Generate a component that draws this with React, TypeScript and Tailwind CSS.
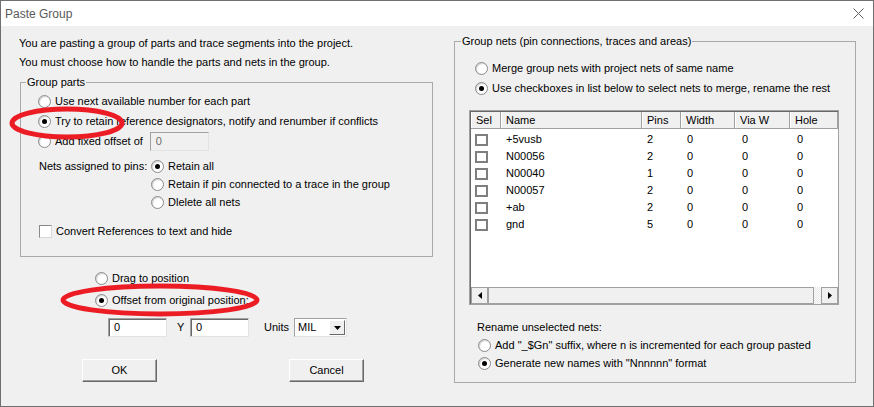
import React from 'react'

const nets = [
  { name: '+5vusb', pins: 2 },
  { name: 'N00056', pins: 2 },
  { name: 'N00040', pins: 1 },
  { name: 'N00057', pins: 2 },
  { name: '+ab', pins: 2 },
  { name: 'gnd', pins: 5 },
]

function Radio({ checked, label, className }: { checked?: boolean; label: React.ReactNode; className?: string }) {
  return (
    <div className={'flex items-center gap-[4px] ' + (className ?? 'h-[20px]')}>
      <span className="w-[13px] h-[13px] shrink-0 rounded-full border border-[#8a8a8a] bg-white flex items-center justify-center shadow-[inset_1px_1px_1px_#d0d0d0]">
        {checked && <span className="w-[5px] h-[5px] rounded-full bg-black" />}
      </span>
      <span>{label}</span>
    </div>
  )
}

function TextBox({ value, disabled, className }: { value: string; disabled?: boolean; className?: string }) {
  return (
    <div
      className={
        'h-[19px] border border-t-[#a0a0a0] border-l-[#a0a0a0] border-b-[#e3e3e3] border-r-[#e3e3e3] pl-[5px] leading-[17px] ' +
        (disabled ? 'bg-[#f0f0f0] text-[#6d6d6d] ' : 'bg-white shadow-[inset_1px_1px_0_#696969] ') +
        (className ?? '')
      }
    >
      {value}
    </div>
  )
}

function Button({ children }: { children: React.ReactNode }) {
  return (
    <button className="w-[75px] h-[23px] bg-[#f0f0f0] border border-t-white border-l-white border-b-[#696969] border-r-[#696969] shadow-[inset_-1px_-1px_0_#a0a0a0]">
      {children}
    </button>
  )
}

function ListCheck() {
  return <span className="block w-[13px] h-[12px] border-2 border-[#7f7f7f] bg-white" />
}

function ArrowBtn({ dir }: { dir: 'left' | 'right' }) {
  return (
    <div className="w-[17px] h-full bg-[#f0f0f0] border border-[#a0a0a0] flex items-center justify-center">
      <svg width="4" height="7" viewBox="0 0 4 7">
        {dir === 'left' ? <path d="M4 0 L0 3.5 L4 7 Z" fill="#000" /> : <path d="M0 0 L4 3.5 L0 7 Z" fill="#000" />}
      </svg>
    </div>
  )
}

const cols = ['w-[30px]', 'w-[141px]', 'w-[39px]', 'w-[54px]', 'w-[55px]', 'w-[48px]']

export default function App() {
  return (
    <div className="relative w-[874px] h-[407px] border border-[#6f6f6f] bg-[#f0f0f0] text-[11px] text-black font-['Liberation_Sans',Arial,sans-serif] overflow-hidden">
      {/* title bar */}
      <div className="h-[25px] bg-white flex items-center justify-between pl-[4px] pr-[9px]">
        <span className="text-[12px] text-[#5a5a5a]">Paste Group</span>
        <svg width="11" height="11" viewBox="0 0 11 11">
          <path d="M0.5 0.5 L10.5 10.5 M10.5 0.5 L0.5 10.5" stroke="#606060" strokeWidth="1" />
        </svg>
      </div>

      <div className="flex pl-[18px]">
        {/* left column */}
        <div className="w-[414px] pt-[8px]">
          <div className="h-[19px] leading-[19px]">You are pasting a group of parts and trace segments into the project.</div>
          <div className="h-[19px] leading-[19px]">You must choose how to handle the parts and nets in the group.</div>

          <fieldset className="mt-[3px] ml-[1px] w-[413px] border border-[#a9a9a9] pb-[16px]">
            <legend className="ml-[5px] px-[1px] leading-[14px]">Group parts</legend>
            <div className="pl-[17px]">
              <div className="pt-[2px]">
                <Radio label="Use next available number for each part" />
                <Radio checked label="Try to retain reference designators, notify and renumber if conflicts" />
                <div className="flex items-center h-[20px]">
                  <Radio label="Add fixed offset of" />
                  <TextBox value="0" disabled className="ml-[7px] w-[59px]" />
                </div>
              </div>
              <div className="mt-[6px] flex pl-[1px]">
                <div className="w-[112px] h-[18px] leading-[18px]">Nets assigned to pins:</div>
                <div>
                  <Radio checked className="h-[18px]" label="Retain all" />
                  <Radio className="h-[18px]" label="Retain if pin connected to a trace in the group" />
                  <Radio className="h-[18px]" label="Dlelete all nets" />
                </div>
              </div>
              <div className="mt-[11px] h-[18px] flex items-center gap-[4px] pl-[1px]">
                <span className="w-[13px] h-[13px] bg-white border border-t-[#8a8a8a] border-l-[#8a8a8a] border-b-[#d8d8d8] border-r-[#d8d8d8]" />
                <span>Convert References to text and hide</span>
              </div>
            </div>
          </fieldset>

          <div className="mt-[11px] pl-[76px]">
            <Radio label="Drag to position" />
            <Radio checked className="h-[20px] mt-[2px]" label="Offset from original position:" />
          </div>

          <div className="mt-[8px] flex items-center pl-[89px]">
            <TextBox value="0" className="w-[59px]" />
            <span className="w-[23px] pl-[10px]">Y</span>
            <TextBox value="0" className="w-[59px]" />
            <span className="ml-[15px] w-[30px]">Units</span>
            <div className="w-[53px] h-[19px] bg-white border border-t-[#a0a0a0] border-l-[#a0a0a0] border-b-[#e3e3e3] border-r-[#e3e3e3] flex items-center">
              <span className="flex-1 pl-[3px]">MIL</span>
              <div className="w-[16px] h-[15px] mr-[1px] bg-[#f0f0f0] border border-t-white border-l-white border-b-[#696969] border-r-[#696969] flex items-center justify-center">
                <svg width="7" height="4" viewBox="0 0 7 4">
                  <path d="M0 0 L7 0 L3.5 4 Z" fill="#000" />
                </svg>
              </div>
            </div>
          </div>

          <div className="mt-[22px] flex pl-[63px] gap-[132px]">
            <Button>OK</Button>
            <Button>Cancel</Button>
          </div>
        </div>

        {/* right column */}
        <div className="ml-[21px] w-[402px] pt-[8px]">
          <fieldset className="w-[402px] border border-[#a9a9a9] pb-[10px]">
            <legend className="ml-[6px] px-[1px] leading-[14px]">Group nets (pin connections, traces and areas)</legend>
            <div className="pt-[10px] pl-[20px]">
              <Radio label="Merge group nets with project nets of same name" />
              <Radio checked label="Use checkboxes in list below to select nets to merge, rename the rest" />
            </div>

            <div className="mt-[12px] ml-[14px] w-[370px] h-[195px] border border-[#a0a0a0] shadow-[inset_1px_1px_0_#696969] bg-white flex flex-col pl-[1px] pt-[1px]">
              <div className="h-[17px] flex bg-[#f0f0f0] border-b border-[#a0a0a0] shrink-0">
                {['Sel', 'Name', 'Pins', 'Width', 'Via W', 'Hole'].map((h, i) => (
                  <div
                    key={h}
                    className={cols[i] + ' h-full leading-[16px] pl-[5px] border-r border-[#a0a0a0] shadow-[inset_1px_0_0_white] shrink-0'}
                  >
                    {h}
                  </div>
                ))}
              </div>
              <div className="flex-1 pt-[2px]">
                {nets.map((n) => (
                  <div key={n.name} className="h-[17px] flex items-center">
                    <div className={cols[0] + ' pl-[4px]'}>
                      <ListCheck />
                    </div>
                    <div className={cols[1] + ' pl-[5px]'}>{n.name}</div>
                    <div className={cols[2] + ' pl-[5px]'}>{n.pins}</div>
                    <div className={cols[3] + ' pl-[6px]'}>0</div>
                    <div className={cols[4] + ' pl-[7px]'}>0</div>
                    <div className={cols[5] + ' pl-[7px]'}>0</div>
                  </div>
                ))}
              </div>
              <div className="h-[17px] flex shrink-0 bg-[#f0f0f0]">
                <ArrowBtn dir="left" />
                <div className="flex-1 bg-[#f0f0f0] border border-[#a0a0a0]" />
                <div className="w-[7px] bg-[repeating-conic-gradient(#e6e6e6_0_25%,#ffffff_0_50%)] bg-[length:2px_2px]" />
                <ArrowBtn dir="right" />
              </div>
            </div>

            <div className="mt-[13px] pl-[22px]">
              <div className="h-[18px] leading-[18px]">Rename unselected nets:</div>
              <Radio className="h-[18px] ml-[1px]" label={'Add "_$Gn" suffix, where n is incremented for each group pasted'} />
              <Radio checked className="h-[18px] ml-[1px]" label={'Generate new names with "Nnnnnn" format'} />
            </div>
          </fieldset>
        </div>
      </div>

      {/* red highlight marks */}
      <svg className="absolute left-0 top-0 pointer-events-none" width="874" height="407">
        <ellipse cx="66" cy="122" rx="55" ry="14" fill="none" stroke="#ec1c24" strokeWidth="5" />
        <ellipse cx="159" cy="299" rx="97" ry="14" fill="none" stroke="#ec1c24" strokeWidth="5" />
      </svg>
    </div>
  )
}
